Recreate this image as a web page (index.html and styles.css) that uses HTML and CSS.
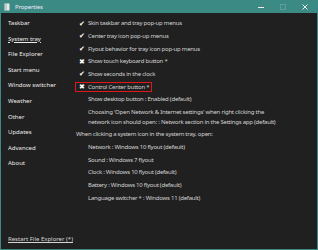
FILE: index.html
```html
<!DOCTYPE html>
<html lang="en">
  <head>
    <meta charset="UTF-8" />
    <title>Properties</title>
    <link rel="stylesheet" href="styles.css">
  </head>
  <body>
    <div class="window">
      <div class="titlebar">
        <svg class="app-icon" width="6" height="8" viewBox="0 0 6 8">
          <rect x="0.5" y="0.5" width="5" height="7" fill="#e8e8e8" />
          <rect x="1.5" y="0.5" width="1" height="7" fill="#9ab" />
        </svg>
        <span class="title">Properties</span>
        <div class="controls">
          <svg width="6" height="6" viewBox="0 0 6 6"><path d="M0 3.5H6" stroke="#eee" stroke-width="1"/></svg>
          <svg class="dim" width="6" height="6" viewBox="0 0 6 6"><rect x="0.5" y="0.5" width="5" height="5" fill="none" stroke="#8ab" stroke-width="1"/></svg>
          <svg width="6" height="6" viewBox="0 0 6 6"><path d="M0.5 0.5L5.5 5.5M5.5 0.5L0.5 5.5" stroke="#eee" stroke-width="1"/></svg>
        </div>
      </div>
      <div class="main">
        <div class="sidebar">
          <div class="nav-item">Taskbar</div>
          <div class="nav-item active">System tray</div>
          <div class="nav-item">File Explorer</div>
          <div class="nav-item">Start menu</div>
          <div class="nav-item">Window switcher</div>
          <div class="nav-item">Weather</div>
          <div class="nav-item">Other</div>
          <div class="nav-item">Updates</div>
          <div class="nav-item">Advanced</div>
          <div class="nav-item">About</div>
          <div class="restart">Restart File Explorer (*)</div>
        </div>
        <div class="content">
          <div class="opt"><span class="mark">&#10004;</span>Skin taskbar and tray pop-up menus</div>
          <div class="opt"><span class="mark">&#10004;</span>Center tray icon pop-up menus</div>
          <div class="opt"><span class="mark">&#10004;</span>Flyout behavior for tray icon pop-up menus</div>
          <div class="opt"><span class="mark">&#10006;</span>Show touch keyboard button *</div>
          <div class="opt"><span class="mark">&#10004;</span>Show seconds in the clock</div>
          <div class="opt"><span class="focus"><span class="mark">&#10006;</span>Control Center button *</span></div>
          <div class="opt sub">Show desktop button : Enabled (default)</div>
          <div class="opt sub multi">Choosing 'Open Network &amp; Internet settings' when right clicking the<br>network icon should open: : Network section in the Settings app (default)</div>
          <div class="opt">When clicking a system icon in the system tray, open:</div>
          <div class="opt sub">Network : Windows 10 flyout (default)</div>
          <div class="opt sub">Sound : Windows 7 flyout</div>
          <div class="opt sub">Clock : Windows 10 flyout (default)</div>
          <div class="opt sub">Battery : Windows 10 flyout (default)</div>
          <div class="opt sub">Language switcher * : Windows 11 (default)</div>
        </div>
      </div>
    </div>
  </body>
</html>
```

FILE: styles.css
```css
body {
  margin: 0;
  font-family: "Noto Sans", sans-serif;
  font-size: 6px;
  background-color: #202020;
}
.window {
  width: 318px;
  height: 250px;
  box-sizing: border-box;
  border: 1px solid #3b8a83;
  border-top: none;
  display: flex;
  flex-direction: column;
}
/* Title bar */
.titlebar {
  height: 13px;
  background-color: #3b8a83;
  display: flex;
  align-items: center;
  padding-left: 3px;
  color: #eef;
}
.app-icon {
  margin-right: 5px;
}
.title {
  letter-spacing: -0.15px;
}
.controls {
  margin-left: auto;
  display: flex;
  align-items: center;
  gap: 16px;
  padding-right: 9px;
}
.controls .dim {
  opacity: 0.5;
}
/* Body */
.main {
  flex: 1;
  display: flex;
  background-color: #202020;
}
.sidebar {
  width: 68px;
  padding: 3px 0 6px 7px;
  display: flex;
  flex-direction: column;
  color: #ececec;
}
.nav-item {
  height: 15.6px;
  line-height: 15.6px;
}
.active {
  text-decoration: underline;
}
.restart {
  margin-top: auto;
  text-decoration: underline;
  color: #d6d6d6;
}
.content {
  flex: 1;
  padding-top: 4px;
  color: #d2d2d2;
  letter-spacing: -0.24px;
}
.opt {
  height: 12.65px;
  display: flex;
  align-items: center;
  white-space: nowrap;
}
.sub {
  padding-left: 12px;
}
.multi {
  display: block;
  height: auto;
  line-height: 10px;
  padding-top: 1.3px;
  padding-bottom: 1.3px;
}
.mark {
  width: 12px;
  text-align: center;
  font-size: 7px;
  letter-spacing: 0;
  color: #fff;
}
.focus {
  display: inline-flex;
  align-items: center;
  border: 1px solid #e0161d;
  margin-left: -1px;
  padding-right: 2px;
  height: 8px;
}
```
